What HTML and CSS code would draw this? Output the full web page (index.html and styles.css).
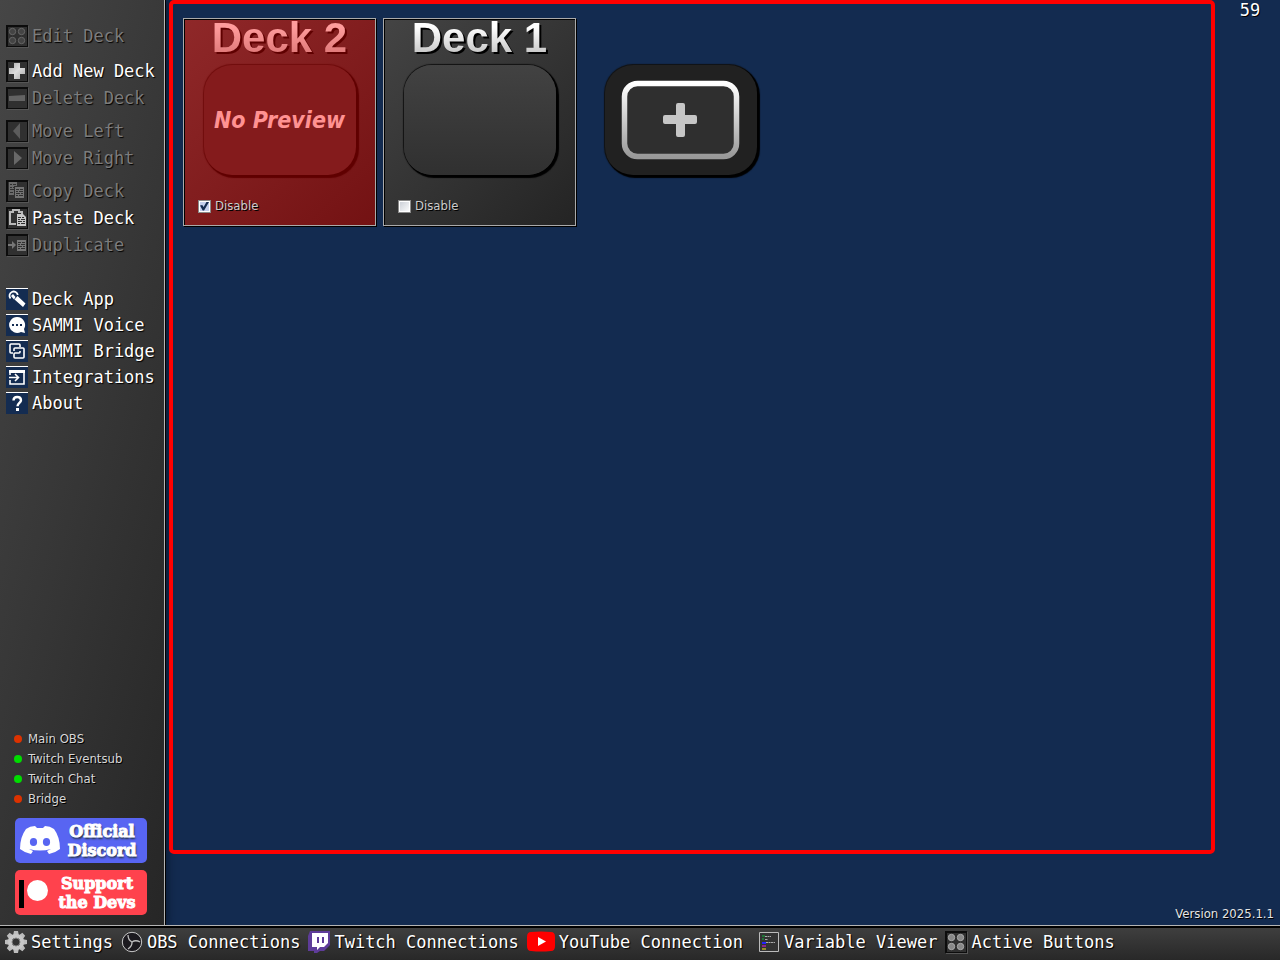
FILE: index.html
```html
<!DOCTYPE html>
<html lang="en">
<head>
<meta charset="utf-8">
<meta name="viewport" content="width=device-width, initial-scale=1">
<title>SAMMI</title>
<link rel="stylesheet" href="styles.css">
</head>
<body class="app">
<div class="workspace">
  <aside class="sidebar">
    <div class="tools">
      <div class="group">
        <button class="item" disabled><svg class="icon framed" viewBox="0 0 22 22"><g fill="#444" stroke="#666"><circle cx="6.500" cy="6.500" r="3.200"/><circle cx="15.500" cy="6.500" r="3.200"/><circle cx="6.500" cy="15.500" r="3.200"/><circle cx="15.500" cy="15.500" r="3.200"/></g></svg>Edit Deck</button>
      </div>
      <div class="group">
        <button class="item"><svg class="icon framed" viewBox="0 0 22 22"><defs><linearGradient id="metal" x1="0" y1="0" x2="1" y2="1"><stop offset="0" stop-color="#aaa"/><stop offset=".5" stop-color="#ddd"/><stop offset="1" stop-color="#aaa"/></linearGradient></defs><path fill="url(#metal)" d="M8 3h6v5h5v6h-5v5H8v-5H3V8h5z"/></svg>Add New Deck</button>
        <button class="item" disabled><svg class="icon framed" viewBox="0 0 22 22"><path fill="#636363" d="M3 9l16-1v6H3z"/></svg>Delete Deck</button>
      </div>
      <div class="group">
        <button class="item" disabled><svg class="icon framed" viewBox="0 0 22 22"><path fill="#5c5c5c" d="M14 3v16L7 11z"/></svg>Move Left</button>
        <button class="item" disabled><svg class="icon framed" viewBox="0 0 22 22"><path fill="#686868" d="M8 4v14l8-7z"/></svg>Move Right</button>
      </div>
      <div class="group">
        <button class="item" disabled><svg class="icon framed" viewBox="0 0 22 22"><path fill="#6c6c6c" d="M3 2h8v4H8v9H3z"/><path stroke="#303030" d="M4 4.500h2m1 0h3M4 7.500h2m1 0h1M4 9.500h4M4 12.500h3"/><path fill="#747474" d="M9 7h9v11H9z"/><path stroke="#303030" d="M10 9.500h3m1 0h3M10 11.500h2m1 0h4M10 13.500h4m1 0h2M10 15.500h2m1 0h4"/></svg>Copy Deck</button>
        <button class="item"><svg class="icon framed" viewBox="0 0 22 22"><path fill="none" stroke="#b8b8b8" stroke-width="2" d="M10 17H4V5h3V3h6v2h3v3"/><path fill="#c8c8c8" d="M11 7h6l3 3v9h-9z"/><path stroke="#303030" d="M12 10.500h3m1 0h2M12 12.500h2m1 0h4M12 14.500h4m1 0h2M12 16.500h2m1 0h4"/></svg>Paste Deck</button>
        <button class="item" disabled><svg class="icon framed" viewBox="0 0 22 22"><path fill="#777" d="M2 10h4V7l4 4-4 4v-3H2zM11 6h9v11h-9z"/><path stroke="#303030" d="M12 8.500h3m1 0h3M12 10.500h2m1 0h4M12 12.500h4m1 0h2M12 14.500h2m1 0h4"/></svg>Duplicate</button>
      </div>
    </div>
    <nav class="links">
      <button class="item"><svg class="icon tile" viewBox="0 0 22 22"><path fill="none" stroke="#fff" stroke-width="1.800" d="M4.500 10.500A4.200 4.200 0 1 1 11.800 7"/><path fill="#fff" d="M7 6l2.500 3L8 11.500 5 8zM8.500 11.500l3-3.500 8 7.500-2.500 3.500z"/></svg>Deck App</button>
      <button class="item"><svg class="icon tile" viewBox="0 0 22 22"><path fill="#fff" d="M11 3a8 8 0 1 0 4 15l4 1-1-4A8 8 0 0 0 11 3z"/><path fill="#142c51" d="M6 10h2v2H6zm4 0h2v2h-2zm4 0h2v2h-2z"/></svg>SAMMI Voice</button>
      <button class="item"><svg class="icon tile" viewBox="0 0 22 22"><path fill="none" stroke="#fff" stroke-width="1.600" d="M7 13H5q-1 0-1-1V5q0-1 1-1h8q1 0 1 1v2M11 13h2q1 0 1-1v-1M8 11V9q0-1 1-1h8q1 0 1 1v8q0 1-1 1H9q-1 0-1-1v-3q0-1 1-1h3"/></svg>SAMMI Bridge</button>
      <button class="item"><svg class="icon tile" viewBox="0 0 22 22"><path fill="none" stroke="#fff" stroke-width="1.600" d="M4 9V5h14v13H4v-4M3 11.500h9M9 8l3.500 3.500L9 15"/><path fill="#fff" d="M3 4h16v3H3z"/></svg>Integrations</button>
      <button class="item"><svg class="icon tile" viewBox="0 0 22 22"><path fill="none" stroke="#fff" stroke-width="2.400" d="M7.500 8.500q0-3.500 3.700-3.500T15 8.200c0 2.500-3.500 2.800-3.500 6"/><path fill="#fff" d="M10 16h3v3h-3z"/></svg>About</button>
    </nav>
    <ul class="status">
      <li class="down">Main OBS</li>
      <li class="up">Twitch Eventsub</li>
      <li class="up">Twitch Chat</li>
      <li class="down">Bridge</li>
    </ul>
    <div class="badges">
      <a class="badge discord" href="#discord"><svg class="mark" viewBox="0 0 42 36"><path fill="#fff" d="M7 6q4-3 9-3l2 2h6l2-2q5 0 9 3 6 8 6 20-5 4-11 5l-2-3 4-2q-11 3-22 0l4 2-2 3Q6 30 1 26 1 14 7 6z"/><ellipse cx="14.500" cy="19" rx="3.600" ry="4" fill="#5865f2"/><ellipse cx="27.500" cy="19" rx="3.600" ry="4" fill="#5865f2"/></svg><span>Official<br>Discord</span></a>
      <a class="badge patreon" href="#support"><svg class="mark" viewBox="0 0 32 36"><path d="M0 5h5v28H0z"/><circle cx="18.500" cy="15.500" r="10.500" fill="#fff"/></svg><span>Support<br>the Devs</span></a>
    </div>
  </aside>
  <main class="main">
    <section class="decks">
      <article class="deck disabled">
        <h2 class="title">Deck 2</h2>
        <button class="preview">No Preview</button>
        <label class="toggle"><input type="checkbox" checked>Disable</label>
      </article>
      <article class="deck">
        <h2 class="title">Deck 1</h2>
        <button class="preview" aria-label="Open Deck 1"></button>
        <label class="toggle"><input type="checkbox">Disable</label>
      </article>
      <button class="add" aria-label="Add deck"><svg viewBox="0 0 152 110"><defs><linearGradient id="rim" x1="0" y1="0" x2="0" y2="1"><stop offset="0" stop-color="#fff"/><stop offset="1" stop-color="#999"/></linearGradient></defs><rect x="19.500" y="18.500" width="112" height="73" rx="13" fill="#2f2f2f" stroke="url(#rim)" stroke-width="5.500"/><path fill="#c6c6c6" d="M73 38h5q2 0 2 2v10h10q2 0 2 2v5q0 2-2 2H80v11q0 2-2 2h-5q-2 0-2-2V59H60q-2 0-2-2v-5q0-2 2-2h11V40q0-2 2-2z"/></svg></button>
    </section>
    <output class="fps">59</output>
    <p class="version">Version 2025.1.1</p>
  </main>
</div>
<footer class="bottombar">
  <button class="item"><svg class="icon" viewBox="0 0 22 22"><g fill="#bdbdbd"><g id="teeth"><path d="M9 0h4l1 5H8zM9 22h4l1-5H8zM0 9v4l5 1V8zM22 9v4l-5 1V8z"/></g><use href="#teeth" transform="rotate(45 11 11)"/></g><circle cx="11" cy="11" r="6" fill="none" stroke="#c8c8c8" stroke-width="4"/><circle cx="11" cy="11" r="4" fill="#333" stroke="#888"/></svg>Settings</button>
  <button class="item"><svg class="icon" viewBox="0 0 22 22"><circle cx="11" cy="11" r="9.700" fill="#1c1a1f" stroke="#c9c9c9"/><g fill="none" stroke="#bdbdbd" stroke-width="1.300"><path id="blade" d="M11 11q-4-2-4-7"/><use href="#blade" transform="rotate(120 11 11)"/><use href="#blade" transform="rotate(240 11 11)"/></g></svg>OBS Connections</button>
  <button class="item"><svg class="icon" viewBox="0 0 22 22"><path fill="#5e3c99" d="M2 0h20v14l-6 6h-4l-3 2H6v-2H0V5z"/><path fill="#fff" d="M4 2h16v10l-4 4h-4l-3 3v-3H4z"/><path fill="#5e3c99" d="M9 6h2v6H9zm5 0h2v6h-2z"/></svg>Twitch Connections</button>
  <button class="item youtube"><svg class="icon" viewBox="0 0 28 22"><path fill="#f00" d="M4 1q10-1 20 0 4 0 4 5v9q0 5-4 5-10 1-20 0-4 0-4-5V6q0-5 4-5z"/><path fill="#fff" d="M11 6l8 4.500-8 4.500z"/></svg>YouTube Connection</button>
  <button class="item"><svg class="icon" viewBox="0 0 22 22"><path fill="#333" stroke="#bbb" d="M1.500 1.500h19v19h-19z"/><g stroke-width="1.500"><path stroke="#1b8a3a" d="M4 5h3M4 8h2"/><path stroke="#22f" stroke-width="2" d="M4 12h4"/><path stroke="#a2a" d="M4 15h4"/><path stroke="#ba2" d="M4 18h4"/><path stroke="#aaa" stroke-width="1" stroke-dasharray="2 .5" d="M7 5.500h6M7 8.500h3M8 11.500h9"/></g></svg>Variable Viewer</button>
  <button class="item"><svg class="icon framed" viewBox="0 0 22 22"><g fill="#888" stroke="#aaa"><circle cx="6.500" cy="6.500" r="3.200"/><circle cx="15.500" cy="6.500" r="3.200"/><circle cx="6.500" cy="15.500" r="3.200"/><circle cx="15.500" cy="15.500" r="3.200"/></g></svg>Active Buttons</button>
</footer>
</body>
</html>
```
FILE: styles.css
```css
* { box-sizing: border-box; }

.app {
  margin: 0;
  min-height: 100vh;
  display: flex;
  flex-direction: column;
  background: #132b50;
  color: #fff;
  font-family: "DejaVu Sans Condensed", "DejaVu Sans", sans-serif;
}

button { border: 0; padding: 0; background: none; color: inherit; font: inherit; cursor: pointer; }

.workspace { flex: 1; display: flex; }

.sidebar {
  flex: none;
  width: 166px;
  display: flex;
  flex-direction: column;
  padding: 25px 6px 10px;
  border-right: 1px solid #000;
  background: linear-gradient(105deg, #464646, #262626);
  box-shadow: inset -1px 0 #b4b4b4, 2px 0 8px #0a1a33;
}

.tools { display: flex; flex-direction: column; gap: 11px; }
.group { display: flex; flex-direction: column; gap: 5px; }
.group:first-child { margin-bottom: 2px; }
.links { display: flex; flex-direction: column; gap: 4px; margin-top: 32px; }

.item {
  display: flex;
  align-items: center;
  gap: 4px;
  height: 22px;
  font-family: "DejaVu Sans Mono", monospace;
  font-size: 17px;
  line-height: 22px;
  white-space: nowrap;
  text-shadow: 1px 1px 1px #000;
}
.item:disabled { color: #7c7c7c; cursor: default; }

.icon { flex: none; width: 22px; height: 22px; }
.framed { background: #303030; box-shadow: inset 2px 2px #0c0c0c, inset -1px -1px #0c0c0c, 1px 1px #555; }
.tile { background: #142c51; box-shadow: inset 0 1px #fff; }

.status {
  list-style: none;
  margin: auto 0 0;
  padding: 0 0 9px 8px;
  font-size: 13px;
  line-height: 20px;
  color: #d8d8d8;
  text-shadow: 1px 1px #000;
}
.status li { display: flex; align-items: center; gap: 6px; }
.status li::before { content: ""; width: 8px; height: 8px; border-radius: 50%; background: currentColor; }
.status .up::before { background: #00dc00; }
.status .down::before { background: #dc3200; }

.badges { display: flex; flex-direction: column; gap: 7px; padding: 0 12px 0 9px; }
.badge {
  display: flex;
  align-items: center;
  height: 45px;
  padding: 0 4px;
  border-radius: 5px;
  color: #fff;
  font-family: "DejaVu Serif", serif;
  font-size: 16px;
  font-weight: bold;
  line-height: 19px;
  text-align: center;
  text-decoration: none;
  -webkit-text-stroke: 1px #fff;
}
.badge span { flex: 1; }
.mark { flex: none; width: 42px; height: 36px; }
.discord { background: #5865f2; text-shadow: 1px 2px 2px #233; }
.patreon { background: #ff424d; }
.patreon .mark { width: 32px; }

.main {
  flex: 1;
  display: grid;
  grid-template: 1fr 71px / 1fr 65px;
  padding-left: 3px;
}
.decks {
  display: flex;
  flex-wrap: wrap;
  align-items: flex-start;
  align-content: flex-start;
  gap: 7px;
  padding: 14px 10px;
  border: 4px solid #f00;
  border-radius: 5px;
}
.fps {
  padding-left: 5px;
  text-align: center;
  font-family: "DejaVu Sans Mono", monospace;
  font-size: 17px;
  line-height: 20px;
  text-shadow: 1px 1px #000;
}
.version {
  grid-column: 1 / -1;
  align-self: end;
  margin: 0;
  padding-right: 6px;
  text-align: right;
  font-size: 13px;
  line-height: 22px;
  color: #e4e4e4;
  text-shadow: 1px 1px #000;
}

.deck {
  display: flex;
  flex-direction: column;
  align-items: center;
  width: 193px;
  height: 208px;
  border: 1px solid #aaa;
  background: linear-gradient(135deg, #444, #242424);
  box-shadow: inset 1px 1px #000, 1px 1px #000;
}
.title {
  margin: 0 0 8px;
  font: bold 42px/38px "Liberation Sans", sans-serif;
  background: linear-gradient(#fff 8px, #c8c8c8 34px);
  background-clip: text;
  -webkit-background-clip: text;
  color: transparent;
  filter: drop-shadow(2px 2px 0 #000);
}
.preview, .add {
  width: 152px;
  height: 110px;
  border-radius: 28px;
  box-shadow: 2px 2px 1px 1px #000, 0 0 1px 1px #111;
}
.preview {
  background: linear-gradient(#424242, #303030);
  font: italic bold 23px "DejaVu Sans Condensed", "DejaVu Sans", sans-serif;
  white-space: nowrap;
}
.toggle {
  display: flex;
  align-items: center;
  align-self: flex-start;
  gap: 4px;
  margin: 21px 0 0 14px;
  font-size: 13px;
  line-height: 20px;
  color: #ccc;
  text-shadow: 1px 1px #000;
}
.toggle input {
  appearance: none;
  width: 13px;
  height: 13px;
  margin: 0;
  border: 1px solid #8a8a8a;
  background: linear-gradient(135deg, #c8ccd4, #fff);
  box-shadow: inset 0 0 0 1px #fff;
}
.toggle input:checked { background: #c4d0ee; }
.toggle input:checked::after {
  content: "";
  display: block;
  width: 9px;
  height: 9px;
  margin: 1px;
  background: #142c51;
  clip-path: polygon(0 45%, 25% 40%, 40% 60%, 75% 0, 100% 5%, 45% 100%, 30% 100%);
}

.disabled { background: linear-gradient(135deg, #8f2829, #731213); }
.disabled .title { background-image: linear-gradient(#ff9c9c 8px, #e07a7a 34px); filter: drop-shadow(2px 2px 0 #600000); }
.disabled .preview { background: #841b1c; color: #ff9292; box-shadow: 2px 2px 1px 1px #600000, 0 0 1px 1px #700c0c; }

.add { margin: 47px 0 0 22px; background: #212121; }
.add svg { display: block; width: 100%; height: 100%; }

.bottombar {
  display: flex;
  align-items: center;
  gap: 8px;
  height: 35px;
  padding: 0 5px 2px;
  border-top: 1px solid #b4b4b4;
  background: linear-gradient(#404040, #282828);
  box-shadow: inset 0 2px #000;
}
.youtube { margin-right: 7px; }
.youtube .icon { width: 28px; }
```
